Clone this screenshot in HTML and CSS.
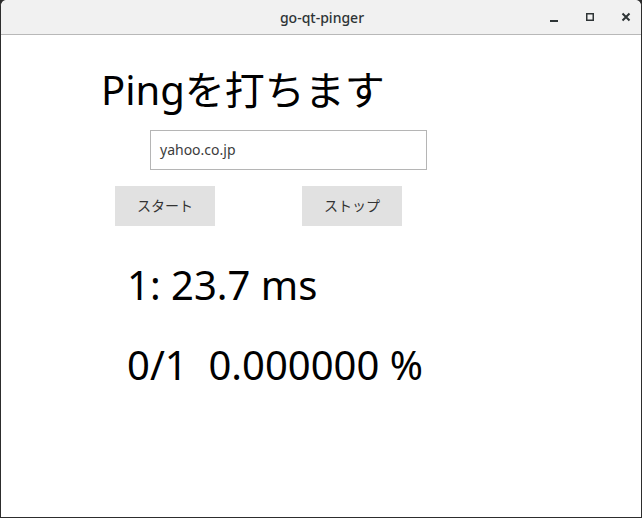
FILE: index.html
```html
<!DOCTYPE html>
<html lang="ja">
<head>
<meta charset="utf-8">
<title>go-qt-pinger</title>
<link rel="stylesheet" href="styles.css">
</head>
<body>
<div class="window">
  <div class="titlebar">
    <span class="title">go-qt-pinger</span>
    <div class="controls">
      <svg class="ctl" width="12" height="12" viewBox="0 0 12 12"><rect x="2" y="9" width="8" height="2" fill="#2e3436"/></svg>
      <svg class="ctl" width="12" height="12" viewBox="0 0 12 12"><rect x="2.75" y="2.75" width="6.5" height="6.5" fill="none" stroke="#2e3436" stroke-width="1.5"/></svg>
      <svg class="ctl" width="12" height="12" viewBox="0 0 12 12"><path d="M2.5 2.5 L9.5 9.5 M9.5 2.5 L2.5 9.5" stroke="#2e3436" stroke-width="2"/></svg>
    </div>
  </div>
  <div class="content">
    <h1 class="heading">Pingを打ちます</h1>
    <div class="host">yahoo.co.jp</div>
    <div class="buttons">
      <button class="btn">スタート</button>
      <button class="btn">ストップ</button>
    </div>
    <div class="result">1: 23.7 ms</div>
    <div class="result">0/1&nbsp;&nbsp;0.000000 %</div>
  </div>
</div>
</body>
</html>
```

FILE: styles.css
```css
html, body {
  margin: 0;
  padding: 0;
  background: #2b2b2b;
}
body {
  width: 642px;
  height: 518px;
  overflow: hidden;
  font-family: "Noto Sans", "Noto Sans CJK JP", sans-serif;
}
.window {
  box-sizing: border-box;
  width: 642px;
  height: 518px;
  background: #ffffff;
  border: 1px solid #2d2d2d;
  border-top: none;
  border-radius: 6px 6px 0 0;
  display: flex;
  flex-direction: column;
}
.titlebar {
  height: 34px;
  background: #f1f1f1;
  border-bottom: 1px solid #b8b8b8;
  border-radius: 6px 6px 0 0;
  position: relative;
  display: flex;
  align-items: center;
  justify-content: center;
}
.title {
  font-family: "Noto Sans", "DejaVu Sans", sans-serif;
  font-size: 14px;
  color: #2e3436;
  font-weight: 500;
  margin-left: 2px;
}
.controls {
  position: absolute;
  right: 9px;
  top: 11px;
  display: flex;
  gap: 24px;
}
.ctl {
  display: block;
}
.content {
  flex: 1;
  display: flex;
  flex-direction: column;
  align-items: flex-start;
}
.heading {
  font-family: "Noto Sans", "Noto Sans CJK JP", sans-serif;
  font-weight: normal;
  font-size: 40px;
  line-height: 48px;
  margin: 31px 0 0 100px;
  color: #000;
}
.host {
  box-sizing: border-box;
  width: 277px;
  height: 40px;
  margin: 16px 0 0 149px;
  border: 1px solid #b5b5b5;
  padding: 0 9px;
  font-size: 14px;
  line-height: 38px;
  color: #3c3c3c;
}
.buttons {
  display: flex;
  gap: 87px;
  margin: 16px 0 0 114px;
}
.btn {
  width: 100px;
  height: 40px;
  border: none;
  background: #e1e1e1;
  font-family: "Noto Sans CJK JP", sans-serif;
  font-size: 14px;
  color: #333;
  padding: 0 0 3px;
}
.result {
  font-size: 40px;
  line-height: 48px;
  color: #000;
  margin-left: 126px;
}
.buttons + .result {
  margin-top: 35px;
}
.result + .result {
  margin-top: 32px;
}
```
